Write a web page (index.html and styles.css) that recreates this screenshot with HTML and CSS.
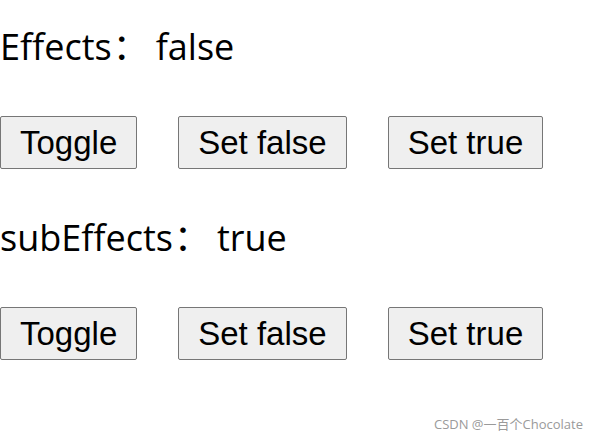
FILE: index.html
```html
<!DOCTYPE html>
<html>
<head>
<meta charset="utf-8">
<link rel="stylesheet" href="styles.css">
</head>
<body>
<div class="page">
  <section class="block">
    <p class="label">Effects<span class="colon">：</span>false</p>
    <div class="row">
      <button class="btn">Toggle</button>
      <button class="btn">Set false</button>
      <button class="btn">Set true</button>
    </div>
  </section>
  <section class="block">
    <p class="label">subEffects<span class="colon">：</span>true</p>
    <div class="row">
      <button class="btn">Toggle</button>
      <button class="btn">Set false</button>
      <button class="btn">Set true</button>
    </div>
  </section>
</div>
<div class="watermark">CSDN @一百个Chocolate</div>
</body>
</html>
```
FILE: styles.css
```css
html, body {
  margin: 0;
  padding: 0;
  background: #ffffff;
}
.page {
  padding-top: 23px;
  display: flex;
  flex-direction: column;
}
.block {
  display: flex;
  flex-direction: column;
  margin-bottom: 45px;
}
.label {
  margin: 0 0 48px 0;
  font-family: "Open Sans", "Noto Sans CJK SC", sans-serif;
  font-size: 36px;
  line-height: 42px;
  color: #000;
  white-space: nowrap;
}
.colon {
  font-family: "Noto Sans CJK SC", sans-serif;
  margin-left: 1px;
  margin-right: 7px;
}
.row {
  display: flex;
  gap: 41px;
}
.btn {
  font-family: "Liberation Sans", Arial, sans-serif;
  font-size: 33px;
  line-height: 37px;
  padding: 7px 19px;
  margin: 0;
  background: #efefef;
  border: 1px solid #767676;
  border-radius: 2px;
  color: #000;
  height: 53px;
}
.watermark {
  position: absolute;
  right: 15px;
  bottom: 8px;
  font-family: "Open Sans", "Noto Sans CJK SC", sans-serif;
  font-size: 13px;
  color: #9a9a9a;
}
```
